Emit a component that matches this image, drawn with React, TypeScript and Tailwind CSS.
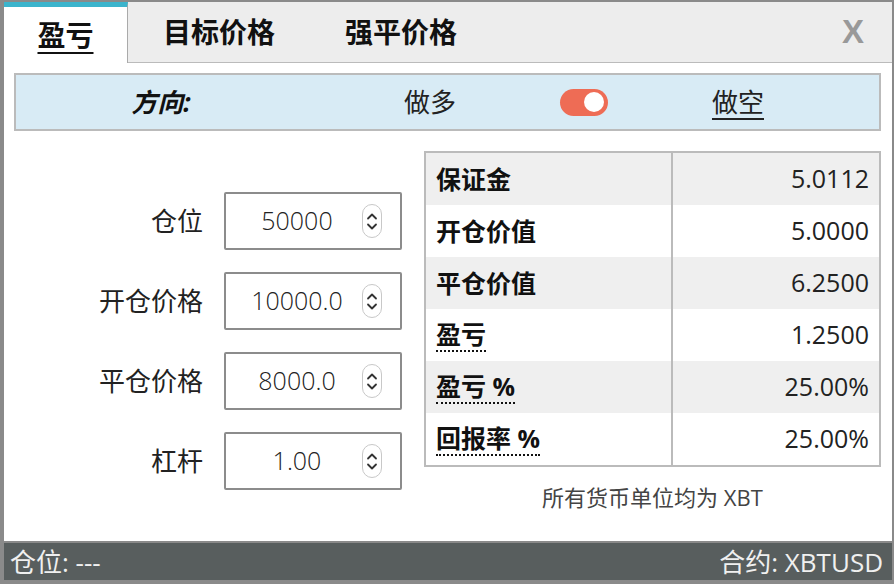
import React from "react";

const font = { fontFamily: '"Open Sans", "Noto Sans CJK SC", sans-serif' };

type Field = { label: string; value: string };

const fields: Field[] = [
  { label: "仓位", value: "50000" },
  { label: "开仓价格", value: "10000.0" },
  { label: "平仓价格", value: "8000.0" },
  { label: "杠杆", value: "1.00" },
];

type Row = { label: string; value: string; dotted?: boolean };

const rows: Row[] = [
  { label: "保证金", value: "5.0112" },
  { label: "开仓价值", value: "5.0000" },
  { label: "平仓价值", value: "6.2500" },
  { label: "盈亏", value: "1.2500", dotted: true },
  { label: "盈亏 %", value: "25.00%", dotted: true },
  { label: "回报率 %", value: "25.00%", dotted: true },
];

const Spinner = () => (
  <div className="w-[20px] h-[34px] rounded-full border border-[#c8c8c8] flex flex-col items-center justify-center gap-[3px]">
    <svg width="12" height="8" viewBox="0 0 12 8" fill="none">
      <path d="M2 6.5 L6 2.5 L10 6.5" stroke="#333" strokeWidth="1.8" strokeLinecap="round" strokeLinejoin="round" />
    </svg>
    <svg width="12" height="8" viewBox="0 0 12 8" fill="none">
      <path d="M2 1.5 L6 5.5 L10 1.5" stroke="#333" strokeWidth="1.8" strokeLinecap="round" strokeLinejoin="round" />
    </svg>
  </div>
);

const App = () => {
  return (
    <div
      className="w-[894px] h-[584px] bg-[#8a8a8a] pl-[4px] pr-[2px] pt-[2px] pb-[4px] flex flex-col"
      style={font}
    >
      <div className="flex-1 bg-white flex flex-col">
        {/* tabs */}
        <div className="h-[61px] bg-[#ededed] border-b border-[#bbbbbb] flex items-stretch">
          <div className="w-[124px] bg-white border-t-[5px] border-[#3cb4cc] border-r border-r-[#aaaaaa] -mb-px flex items-center justify-center">
            <span className="text-[28px] leading-[34px] font-semibold text-[#111] underline underline-offset-[6px] decoration-2">
              盈亏
            </span>
          </div>
          <div className="w-[182px] flex items-center justify-center text-[28px] leading-[34px] font-semibold text-[#111]">
            目标价格
          </div>
          <div className="w-[182px] flex items-center justify-center text-[28px] leading-[34px] font-semibold text-[#111]">
            强平价格
          </div>
          <div
            className="ml-auto pr-[28px] flex items-center text-[33px] font-bold text-[#999]"
            style={{ fontFamily: '"Liberation Sans", sans-serif' }}
          >
            X
          </div>
        </div>

        {/* direction bar */}
        <div className="mt-[10px] ml-[10px] mr-[11px] h-[58px] bg-[#d8ebf5] border-2 border-[#bbbbbb] flex items-center">
          <div className="w-[290px] text-center text-[26px] font-bold italic text-[#111]">方向:</div>
          <div className="w-[248px] text-center text-[26px] text-[#222]">做多</div>
          <div className="w-[60px] flex justify-center">
            <div className="w-[48px] h-[27px] rounded-full bg-[#ee6c55] flex items-center justify-end pr-[4px]">
              <div className="w-[20px] h-[20px] rounded-full bg-white" />
            </div>
          </div>
          <div className="w-[248px] text-center text-[26px] text-[#222]">
            <span className="underline underline-offset-[6px]">做空</span>
          </div>
        </div>

        {/* body */}
        <div className="flex flex-1">
          <div className="w-[398px] pt-[61px] flex flex-col gap-[22px]">
            {fields.map((f) => (
              <div key={f.label} className="flex items-center justify-end gap-[21px]">
                <span className="text-[26px] text-[#222]">{f.label}</span>
                <div className="w-[178px] h-[58px] border-2 border-[#8c8c8c] rounded-[2px] flex items-center pr-[18px]">
                  <span className="flex-1 text-center text-[25px] font-light text-[#222] pl-[6px]">{f.value}</span>
                  <Spinner />
                </div>
              </div>
            ))}
          </div>

          <div className="ml-[22px] pt-[20px] w-[457px] flex flex-col">
            <div className="border-2 border-[#bbbbbb]">
              {rows.map((r, i) => (
                <div
                  key={r.label}
                  className={`h-[52px] flex ${i % 2 === 0 ? "bg-[#efefef]" : "bg-white"}`}
                >
                  <div className="w-[247px] border-r-2 border-[#bbbbbb] pl-[10px] flex items-center">
                    <span
                      className={`text-[25px] font-bold text-[#111] leading-[32px] ${
                        r.dotted ? "border-b-2 border-dotted border-[#111]" : ""
                      }`}
                    >
                      {r.label}
                    </span>
                  </div>
                  <div className="flex-1 pr-[10px] flex items-center justify-end text-[25px] text-[#222]">
                    {r.value}
                  </div>
                </div>
              ))}
            </div>
            <div className="mt-[14px] text-center text-[22px] text-[#444]">所有货币单位均为 XBT</div>
          </div>
        </div>
      </div>

      {/* status bar */}
      <div className="mt-[2px] h-[37px] bg-[#585e5e] flex items-center justify-between pl-[6px] pr-[9px] text-[26px] leading-[30px] text-[#f0f0f0]">
        <span>仓位: ---</span>
        <span>合约: XBTUSD</span>
      </div>
    </div>
  );
};

export default App;
